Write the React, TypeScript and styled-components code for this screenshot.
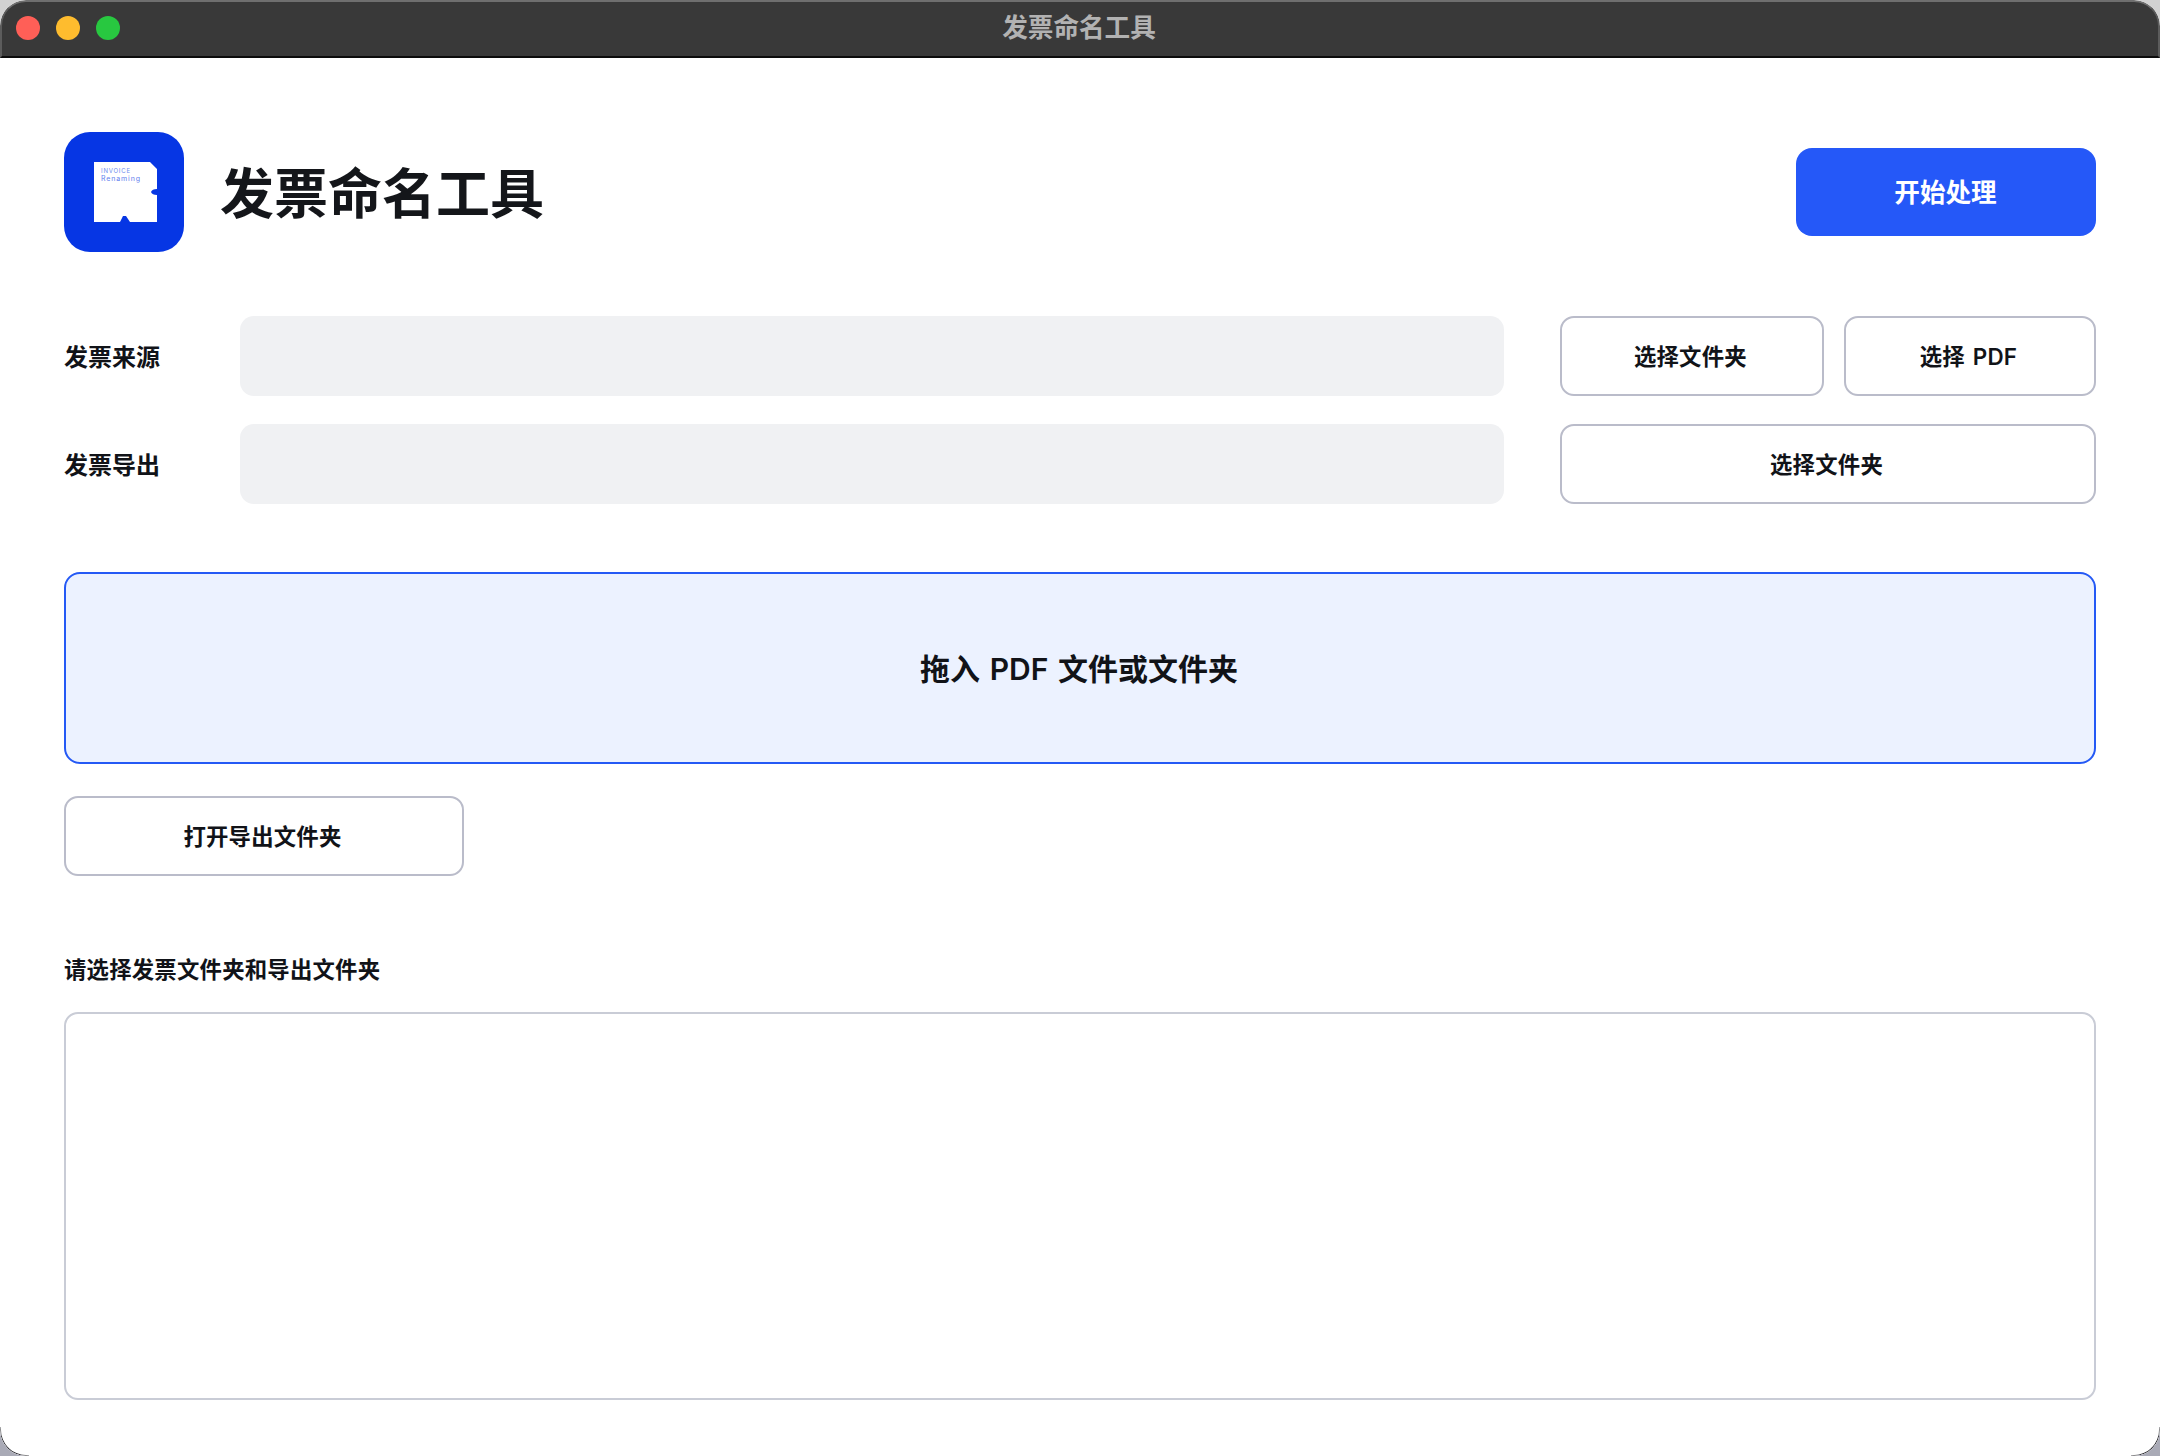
import styled, { createGlobalStyle } from "styled-components";

const GlobalStyle = createGlobalStyle`
  html, body {
    margin: 0;
    padding: 0;
    background: linear-gradient(#d2d2d2 0, #d2d2d2 60px, #a9aab6 1400px);
  }
  * {
    box-sizing: border-box;
  }
`;

const fontStack = `"Inter", "Noto Sans CJK SC", sans-serif`;

const Window = styled.div`
  position: relative;
  width: 2160px;
  height: 1456px;
  display: flex;
  flex-direction: column;
  background: #fff;
  border-radius: 26px;
  overflow: hidden;
  font-family: ${fontStack};
  color: #111318;

  &::before,
  &::after {
    content: "";
    position: absolute;
    bottom: 0;
    width: 28px;
    height: 28px;
    border-bottom: 1px solid #2e2e33;
  }
  &::before {
    left: 0;
    border-left: 1px solid #2e2e33;
    border-bottom-left-radius: 26px;
    mask-image: linear-gradient(to top right, #000 35%, transparent 60%);
  }
  &::after {
    right: 0;
    border-right: 1px solid #2e2e33;
    border-bottom-right-radius: 26px;
    mask-image: linear-gradient(to top left, #000 35%, transparent 60%);
  }
`;

const TitleBar = styled.header`
  flex: none;
  height: 58px;
  display: grid;
  grid-template-columns: 1fr auto 1fr;
  align-items: center;
  padding: 0 14px 2px;
  background: #393939;
  border-top: 2px solid #6f6f6f;
  border-bottom: 2px solid #0c0c0c;
  border-left: 2px solid #5c5c5c;
  border-right: 2px solid #5c5c5c;
  border-top-left-radius: 26px;
  border-top-right-radius: 26px;
`;

const Lights = styled.div`
  display: flex;
  gap: 16px;
`;

const Light = styled.span<{ $color: string }>`
  width: 24px;
  height: 24px;
  border-radius: 50%;
  background: ${(p) => p.$color};
`;

const WindowTitle = styled.div`
  font-size: 25.6px;
  font-weight: 700;
  color: #b2b2b2;
  margin: 0 2px 6px 0;
`;

const Main = styled.main`
  flex: 1;
  min-height: 0;
  display: flex;
  flex-direction: column;
  padding: 74px 64px 56px;
`;

const Header = styled.div`
  display: flex;
  align-items: center;
  justify-content: space-between;
  margin-bottom: 64px;
`;

const Brand = styled.div`
  display: flex;
  align-items: center;
  gap: 36px;
`;

const Title = styled.h1`
  margin: 0;
  padding-top: 6px;
  font-size: 54px;
  font-weight: 700;
  line-height: 1.2;
  color: #14161a;
`;

const Button = styled.button<{ $grow?: number }>`
  flex: ${(p) => p.$grow ?? 1} 1 0;
  height: 80px;
  padding: 0 3px 3px 0;
  border: 2px solid #babcca;
  border-radius: 14px;
  background: #fff;
  font-family: ${fontStack};
  font-size: 22.4px;
  font-weight: 600;
  letter-spacing: 0.2px;
  word-spacing: 2px;
  color: #111318;
`;

const StartButton = styled.button`
  width: 300px;
  height: 88px;
  padding: 0 1px 3px 0;
  border: none;
  border-radius: 16px;
  background: #2558f8;
  font-family: ${fontStack};
  font-size: 25.6px;
  font-weight: 700;
  color: #fff;
`;

const Form = styled.div`
  display: flex;
  flex-direction: column;
  gap: 28px;
  margin-bottom: 68px;
`;

const Row = styled.div`
  display: flex;
  align-items: center;
`;

const RowLabel = styled.label`
  flex: none;
  width: 176px;
  padding-bottom: 2px;
  font-size: 24px;
  font-weight: 700;
`;

const PathField = styled.div`
  flex: 1;
  height: 80px;
  border-radius: 14px;
  background: #f0f1f3;
`;

const Actions = styled.div`
  flex: none;
  width: 536px;
  margin-left: 56px;
  display: flex;
  gap: 20px;
`;

const DropZone = styled.div`
  flex: none;
  height: 192px;
  display: flex;
  align-items: center;
  justify-content: center;
  padding: 0 2px 2px 0;
  border: 2px solid #2459f5;
  border-radius: 16px;
  background: #ecf2ff;
  font-size: 30px;
  font-weight: 600;
  word-spacing: 2px;
  margin-bottom: 32px;
`;

const OpenRow = styled.div`
  display: flex;
  width: 400px;
  margin-bottom: 78px;
`;

const Status = styled.div`
  font-size: 22.4px;
  font-weight: 600;
  letter-spacing: 0.2px;
  line-height: 32px;
  margin-bottom: 26px;
`;

const LogBox = styled.div`
  flex: 1;
  border: 2px solid #c9ccd6;
  border-radius: 14px;
  background: #fff;
`;

const AppIcon = () => (
  <svg width="120" height="120" viewBox="0 0 120 120">
    <rect width="120" height="120" rx="26" fill="#0636e4" />
    <path
      d="M30 30 H86 L93 37 V57 Q88 57 87 60 Q88 63 93 63 V90 H66 L62 84 H59 L56 90 H30 Z"
      fill="#fff"
    />
    <text x="37" y="41" fontSize="6" fontFamily="Inter, sans-serif" fill="#6f8dee" textLength="29">
      INVOICE
    </text>
    <text x="37" y="49" fontSize="7" fontFamily="Inter, sans-serif" fill="#5f80ee" textLength="39">
      Renaming
    </text>
  </svg>
);

const App = () => {
  return (
    <>
      <GlobalStyle />
      <Window>
        <TitleBar>
          <Lights>
            <Light $color="#ff5f57" />
            <Light $color="#febc2e" />
            <Light $color="#28c840" />
          </Lights>
          <WindowTitle>发票命名工具</WindowTitle>
        </TitleBar>
        <Main>
          <Header>
            <Brand>
              <AppIcon />
              <Title>发票命名工具</Title>
            </Brand>
            <StartButton>开始处理</StartButton>
          </Header>
          <Form>
            <Row>
              <RowLabel>发票来源</RowLabel>
              <PathField />
              <Actions>
                <Button $grow={264}>选择文件夹</Button>
                <Button $grow={252}>选择 PDF</Button>
              </Actions>
            </Row>
            <Row>
              <RowLabel>发票导出</RowLabel>
              <PathField />
              <Actions>
                <Button>选择文件夹</Button>
              </Actions>
            </Row>
          </Form>
          <DropZone>拖入 PDF 文件或文件夹</DropZone>
          <OpenRow>
            <Button>打开导出文件夹</Button>
          </OpenRow>
          <Status>请选择发票文件夹和导出文件夹</Status>
          <LogBox />
        </Main>
      </Window>
    </>
  );
};

export default App;
